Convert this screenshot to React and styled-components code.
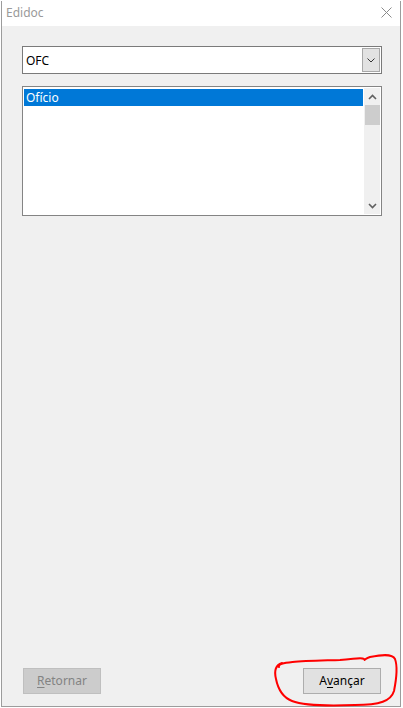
import React from "react";
import styled, { createGlobalStyle } from "styled-components";

const Global = createGlobalStyle`
  html, body { margin: 0; padding: 0; background: #ffffff; }
  body { font-family: "Noto Sans", "Segoe UI", sans-serif; }
  #root { width: 403px; height: 708px; overflow: hidden; }
`;

const Page = styled.div`
  width: 403px;
  height: 708px;
  padding: 1px 0 0 1px;
  box-sizing: border-box;
`;

const Window = styled.div`
  width: 400px;
  height: 706px;
  box-sizing: border-box;
  border: 1px solid #9c9c9c;
  border-top: none;
  background: #f0f0f0;
  display: flex;
  flex-direction: column;
`;

const TitleBar = styled.div`
  height: 25px;
  background: #ffffff;
  display: flex;
  align-items: center;
  padding: 0 8px 0 4px;
  flex-shrink: 0;
`;

const Title = styled.span`
  font-size: 12px;
  color: #9a9a9a;
  flex: 1;
  margin-top: -2px;
`;

const CloseIcon = styled.svg`
  width: 11px;
  height: 11px;
  margin-top: -2px;
`;

const Body = styled.div`
  flex: 1;
  display: flex;
  flex-direction: column;
  padding: 20px 0 12px 20px;
`;

const Combo = styled.div`
  width: 360px;
  height: 28px;
  box-sizing: border-box;
  border: 1px solid #7a7a7a;
  background: #ffffff;
  display: flex;
  align-items: center;
  padding: 1px;
`;

const ComboText = styled.span`
  flex: 1;
  font-size: 12px;
  color: #000;
  padding-left: 2px;
`;

const DropButton = styled.div`
  width: 18px;
  height: 24px;
  box-sizing: border-box;
  border: 1px solid #a8a8a8;
  background: #e2e2e2;
  display: flex;
  align-items: center;
  justify-content: center;
`;

const ListBox = styled.div`
  margin-top: 12px;
  width: 360px;
  height: 130px;
  box-sizing: border-box;
  border: 1px solid #848484;
  background: #ffffff;
  display: flex;
  padding: 1px;
`;

const Items = styled.div`
  flex: 1;
  padding-top: 1px;
`;

const Item = styled.div`
  height: 17px;
  line-height: 17px;
  padding-left: 2px;
  font-size: 12px;
  background: ${(p) => (p.$selected ? "#0078d7" : "transparent")};
  color: ${(p) => (p.$selected ? "#ffffff" : "#000000")};
`;

const ScrollBar = styled.div`
  width: 16px;
  margin-left: 1px;
  background: #f0f0f0;
  display: flex;
  flex-direction: column;
  align-items: center;
`;

const ArrowBox = styled.div`
  height: 17px;
  width: 100%;
  display: flex;
  align-items: center;
  justify-content: center;
`;

const Thumb = styled.div`
  width: 15px;
  height: 20px;
  background: #cdcdcd;
`;

const Spacer = styled.div`
  flex: 1;
`;

const ButtonRow = styled.div`
  margin-top: auto;
  width: 358px;
  margin-left: 1px;
  display: flex;
  justify-content: space-between;
  position: relative;
`;

const Button = styled.div`
  width: 78px;
  height: 26px;
  box-sizing: border-box;
  border: 1px solid ${(p) => (p.$disabled ? "#bfbfbf" : "#adadad")};
  background: ${(p) => (p.$disabled ? "#cccccc" : "#e1e1e1")};
  color: ${(p) => (p.$disabled ? "#838383" : "#000000")};
  font-size: 12px;
  display: flex;
  align-items: center;
  justify-content: center;
  padding-bottom: 1px;
  u { text-decoration-thickness: 1px; text-underline-offset: 2px; }
`;

const Scribble = styled.svg`
  position: absolute;
  left: 247px;
  top: -17px;
  width: 130px;
  height: 58px;
  overflow: visible;
  pointer-events: none;
`;

export default function App() {
  return (
    <>
      <Global />
      <Page>
        <Window>
          <TitleBar>
            <Title>Edidoc</Title>
            <CloseIcon viewBox="0 0 11 11">
              <path d="M0.5 0.5 L10.5 10.5 M10.5 0.5 L0.5 10.5" stroke="#8a8a8a" strokeWidth="1" fill="none" />
            </CloseIcon>
          </TitleBar>
          <Body>
            <Combo>
              <ComboText>OFC</ComboText>
              <DropButton>
                <svg width="8" height="5" viewBox="0 0 8 5">
                  <path d="M0.5 0.5 L4 4 L7.5 0.5" stroke="#333" strokeWidth="1" fill="none" />
                </svg>
              </DropButton>
            </Combo>
            <ListBox>
              <Items>
                <Item $selected>Ofício</Item>
              </Items>
              <ScrollBar>
                <ArrowBox>
                  <svg width="9" height="6" viewBox="0 0 9 6">
                    <path d="M1 5 L4.5 1.5 L8 5" stroke="#606060" strokeWidth="1.6" fill="none" />
                  </svg>
                </ArrowBox>
                <Thumb />
                <Spacer />
                <ArrowBox>
                  <svg width="9" height="6" viewBox="0 0 9 6">
                    <path d="M1 1 L4.5 4.5 L8 1" stroke="#606060" strokeWidth="1.6" fill="none" />
                  </svg>
                </ArrowBox>
              </ScrollBar>
            </ListBox>
            <ButtonRow>
              <Button $disabled>
                <span><u>R</u>etornar</span>
              </Button>
              <Button>
                <span>A<u>v</u>ançar</span>
              </Button>
              <Scribble viewBox="0 0 130 58">
                <path
                  d="M9 16 C 6 10, 40 10, 70 9 C 85 8, 92 6, 94 8 C 96 10, 92 9, 100 6 C 110 4, 122 2, 125 8 C 128 16, 126 30, 124 40 C 121 50, 110 54, 85 54 C 60 55, 35 55, 22 50 C 12 46, 8 38, 6 28 C 4 20, 6 14, 12 12"
                  stroke="#ff0000"
                  strokeWidth="2"
                  fill="none"
                  strokeLinecap="round"
                />
              </Scribble>
            </ButtonRow>
          </Body>
        </Window>
      </Page>
    </>
  );
}
